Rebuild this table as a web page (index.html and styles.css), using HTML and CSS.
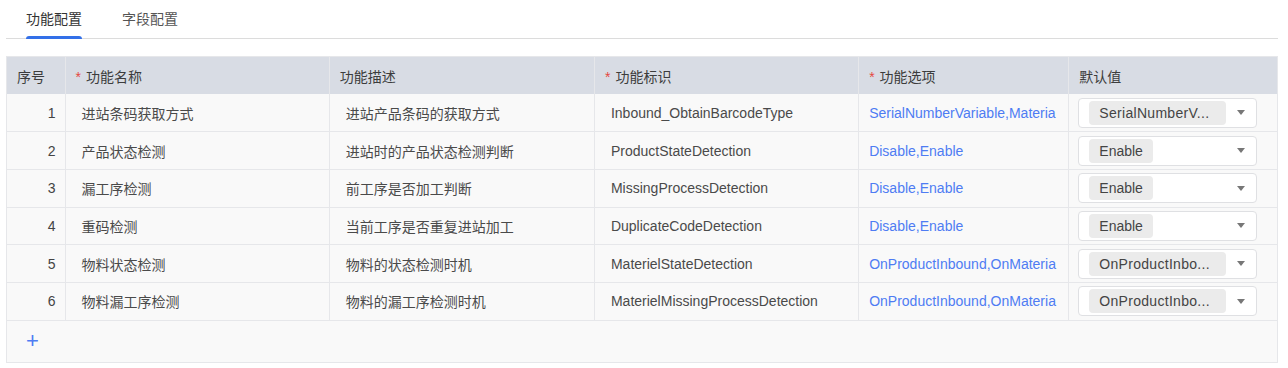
FILE: index.html
```html
<!DOCTYPE html>
<html lang="zh-CN">
<head>
  <meta charset="UTF-8">
  <title>功能配置</title>
  <link rel="stylesheet" href="styles.css">
</head>
<body>
  <div class="page">
    <div class="tabs">
      <div class="tab active">功能配置</div>
      <div class="tab">字段配置</div>
    </div>
    <div class="table-wrap">
      <table class="config-table">
        <colgroup>
          <col style="width:58px">
          <col style="width:264px">
          <col style="width:265px">
          <col style="width:264px">
          <col style="width:210px">
          <col style="width:208px">
        </colgroup>
        <thead>
          <tr>
            <th>序号</th>
            <th><span class="req">*</span>功能名称</th>
            <th>功能描述</th>
            <th><span class="req">*</span>功能标识</th>
            <th><span class="req">*</span>功能选项</th>
            <th>默认值</th>
          </tr>
        </thead>
        <tbody>
          <tr>
            <td class="num">1</td>
            <td class="pad">进站条码获取方式</td>
            <td class="pad">进站产品条码的获取方式</td>
            <td class="pad">Inbound_ObtainBarcodeType</td>
            <td class="link"><div class="clip">SerialNumberVariable,Materia</div></td>
            <td class="sel-cell"><div class="select"><span class="tag long">SerialNumberV...</span><span class="arrow"></span></div></td>
          </tr>
          <tr>
            <td class="num">2</td>
            <td class="pad">产品状态检测</td>
            <td class="pad">进站时的产品状态检测判断</td>
            <td class="pad">ProductStateDetection</td>
            <td class="link"><div class="clip">Disable,Enable</div></td>
            <td class="sel-cell"><div class="select"><span class="tag">Enable</span><span class="arrow"></span></div></td>
          </tr>
          <tr>
            <td class="num">3</td>
            <td class="pad">漏工序检测</td>
            <td class="pad">前工序是否加工判断</td>
            <td class="pad">MissingProcessDetection</td>
            <td class="link"><div class="clip">Disable,Enable</div></td>
            <td class="sel-cell"><div class="select"><span class="tag">Enable</span><span class="arrow"></span></div></td>
          </tr>
          <tr>
            <td class="num">4</td>
            <td class="pad">重码检测</td>
            <td class="pad">当前工序是否重复进站加工</td>
            <td class="pad">DuplicateCodeDetection</td>
            <td class="link"><div class="clip">Disable,Enable</div></td>
            <td class="sel-cell"><div class="select"><span class="tag">Enable</span><span class="arrow"></span></div></td>
          </tr>
          <tr>
            <td class="num">5</td>
            <td class="pad">物料状态检测</td>
            <td class="pad">物料的状态检测时机</td>
            <td class="pad">MaterielStateDetection</td>
            <td class="link"><div class="clip">OnProductInbound,OnMateria</div></td>
            <td class="sel-cell"><div class="select"><span class="tag long">OnProductInbo...</span><span class="arrow"></span></div></td>
          </tr>
          <tr>
            <td class="num">6</td>
            <td class="pad">物料漏工序检测</td>
            <td class="pad">物料的漏工序检测时机</td>
            <td class="pad">MaterielMissingProcessDetection</td>
            <td class="link"><div class="clip">OnProductInbound,OnMateria</div></td>
            <td class="sel-cell"><div class="select"><span class="tag long">OnProductInbo...</span><span class="arrow"></span></div></td>
          </tr>
        </tbody>
      </table>
      <div class="add-row"><span class="plus">+</span></div>
    </div>
  </div>
</body>
</html>
```

FILE: styles.css
```css
* {
  box-sizing: border-box;
}
body {
  margin: 0;
  font-family: "Liberation Sans", "Noto Sans CJK SC", sans-serif;
  font-size: 14px;
  color: #4a4a4a;
  background: #fff;
}
.page {
  padding: 0 10px 0 6px;
}
.tabs {
  display: flex;
  gap: 40px;
  padding-left: 20px;
  height: 39px;
  border-bottom: 1px solid #dcdcdc;
}
.tab {
  position: relative;
  white-space: nowrap;
  padding-top: 9px;
  line-height: 20px;
  color: #555;
}
.tab.active {
  color: #333;
}
.tab.active::after {
  content: "";
  position: absolute;
  left: 0;
  right: 0;
  bottom: -1px;
  height: 3px;
  background: #3370e8;
  border-radius: 3px 3px 0 0;
}
.table-wrap {
  margin-top: 17px;
  border: 1px solid #e6e7ea;
  background: #f9f9f9;
}
.config-table {
  width: 100%;
  border-collapse: collapse;
  table-layout: fixed;
}
.config-table th {
  height: 37px;
  background: #d8dce4;
  font-weight: normal;
  text-align: left;
  padding: 0 10px;
  color: #3c3c3c;
  border-left: 1px solid #e6e7ea;
}
.config-table th:first-child,
.config-table td:first-child {
  border-left: none;
}
.req {
  color: #e5483f;
  margin-right: 5px;
}
.config-table td {
  height: 37.7px;
  border-left: 1px solid #e6e7ea;
  border-bottom: 1px solid #e6e7ea;
  padding: 0 10px;
  white-space: nowrap;
}
.config-table td.num {
  text-align: right;
  padding-right: 9px;
  color: #444;
}
.config-table td.pad {
  padding-left: 16px;
}
.config-table td.link {
  color: #4e7cf3;
  padding-right: 10px;
}
.clip {
  overflow: hidden;
}
.config-table td.sel-cell {
  padding: 0 20px 0 9px;
}
.select {
  display: flex;
  align-items: center;
  justify-content: space-between;
  height: 30px;
  padding: 0 11px 0 10px;
  border: 1px solid #dfe0e3;
  border-radius: 4px;
  background: #fff;
}
.tag {
  background: #ebebeb;
  border-radius: 4px;
  padding: 0 10px;
  line-height: 24px;
  min-width: 61px;
  color: #444;
}
.tag.long {
  width: 137px;
  letter-spacing: 0.3px;
}
.arrow {
  width: 0;
  height: 0;
  border-left: 4px solid transparent;
  border-right: 4px solid transparent;
  border-top: 5px solid #777;
}
.add-row {
  height: 41px;
  padding-left: 19px;
  display: flex;
  align-items: center;
}
.plus {
  color: #4e7cf3;
  font-size: 22px;
  font-weight: 300;
  line-height: 1;
}
```
